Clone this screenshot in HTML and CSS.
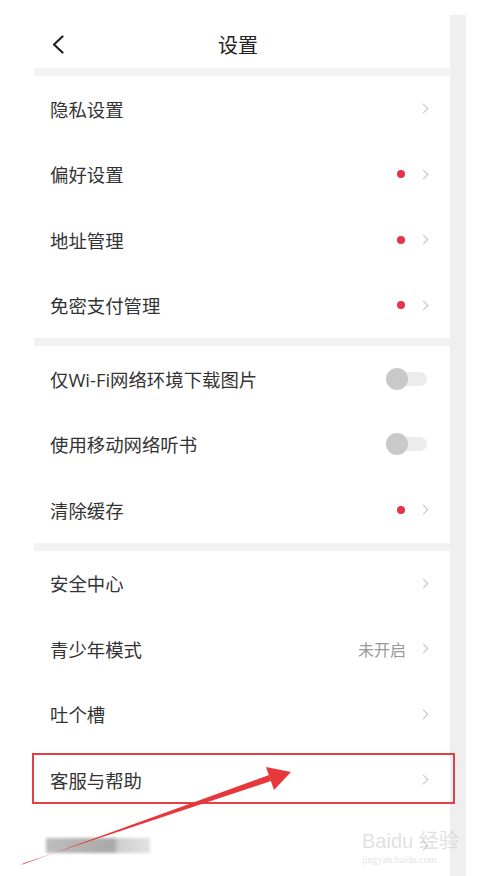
FILE: index.html
```html
<!DOCTYPE html>
<html lang="zh-CN">
<head>
    <meta charset="UTF-8">
    <meta name="viewport" content="width=device-width, initial-scale=1.0">
    <title>设置</title>
    <link rel="stylesheet" href="styles.css">
</head>
<body>

<div class="page">
    <div class="screen">
        <div class="header">
            <svg class="back" width="12" height="19" viewBox="0 0 12 19">
                <polyline points="10.5,1.5 2,9.5 10.5,17.5" fill="none" stroke="#222" stroke-width="2.2" stroke-linecap="round" stroke-linejoin="round"/>
            </svg>
            <h1>设置</h1>
            <span></span>
        </div>

        <div class="gap"></div>

        <div class="group">
            <div class="row"><span class="label">隐私设置</span><i class="chevron"></i></div>
            <div class="row"><span class="label">偏好设置</span><i class="dot"></i><i class="chevron"></i></div>
            <div class="row"><span class="label">地址管理</span><i class="dot"></i><i class="chevron"></i></div>
            <div class="row"><span class="label">免密支付管理</span><i class="dot"></i><i class="chevron"></i></div>
        </div>

        <div class="gap"></div>

        <div class="group">
            <div class="row"><span class="label">仅Wi-Fi网络环境下载图片</span><i class="toggle"></i></div>
            <div class="row"><span class="label">使用移动网络听书</span><i class="toggle"></i></div>
            <div class="row"><span class="label">清除缓存</span><i class="dot"></i><i class="chevron"></i></div>
        </div>

        <div class="gap"></div>

        <div class="group">
            <div class="row"><span class="label">安全中心</span><i class="chevron"></i></div>
            <div class="row"><span class="label">青少年模式</span><span class="value">未开启</span><i class="chevron"></i></div>
            <div class="row"><span class="label">吐个槽</span><i class="chevron"></i></div>
            <div class="row"><span class="label">客服与帮助</span><i class="chevron"></i></div>
            <div class="row"><span class="label"><span class="blurred"></span></span><i class="chevron"></i></div>
        </div>
    </div>

    <div class="rail"></div>

    <!-- annotation on top of the screenshot -->
    <div class="highlight"></div>
    <svg class="pointer" width="479" height="876" viewBox="0 0 479 876">
        <polygon points="21,865 24,863 271,781 269,775" fill="#e8373a"/>
        <polygon points="291,772 266,767 274,790" fill="#e8373a"/>
    </svg>
    <div class="watermark">
        <span class="brand">Bai<b>du</b> 经验</span>
        <span class="site">jingyan.baidu.com</span>
    </div>
</div>

</body>
</html>
```

FILE: styles.css
```css
:root {
    --text-color: #333;
    --muted-color: #999;
    --line-color: #f2f2f2;
    --accent-color: #e8334a;
}
body {
    margin: 0;
    padding: 0;
    background: #fff;
    font-family: 'Open Sans', 'Noto Sans CJK SC', sans-serif;
    color: var(--text-color);
}
.page {
    position: relative;
    display: flex;
    width: 479px;
    height: 876px;
    overflow: hidden;
}
.screen {
    width: 416px;
    margin-left: 34px;
}
.rail {
    width: 16px;
    margin-top: 15px;
    background: #efefef;
}
.header {
    height: 48px;
    display: grid;
    grid-template-columns: 1fr auto 1fr;
    align-items: center;
    padding: 20px 26px 0 18px;
}
.header .back {
    margin-top: 1px;
}
.header h1 {
    margin: 0;
    font-size: 20px;
    font-weight: 400;
    color: #222;
}
.gap {
    height: 8px;
    background: var(--line-color);
}
.row {
    height: 65.5px;
    display: flex;
    align-items: center;
    padding: 0 21px 0 16px;
}
.label {
    flex: 1;
    font-size: 18.4px;
}
.value {
    font-size: 16px;
    color: var(--muted-color);
    margin-right: 14px;
}
.dot {
    width: 8px;
    height: 8px;
    border-radius: 50%;
    background: var(--accent-color);
    margin-right: 15px;
}
.chevron {
    width: 6px;
    height: 6px;
    border-top: 1.5px solid #c2c2c2;
    border-right: 1.5px solid #c2c2c2;
    transform: rotate(45deg);
    margin-right: 2px;
}
.toggle {
    position: relative;
    width: 41px;
    height: 14px;
    border-radius: 7px;
    background: #ececec;
    margin-right: 2px;
}
.toggle::before {
    content: '';
    position: absolute;
    left: 0;
    top: -4px;
    width: 22px;
    height: 22px;
    border-radius: 50%;
    background: #c9c9c9;
}
.blurred {
    display: block;
    width: 104px;
    height: 15px;
    margin-left: -4px;
    background: linear-gradient(90deg, #bdbdbd 0%, #a9a9a9 65%, #cfcfcf 70%, #e2e2e2 100%);
    filter: blur(1.5px);
}
.highlight {
    position: absolute;
    left: 32px;
    top: 753px;
    width: 419px;
    height: 47px;
    border: 2px solid #e04046;
}
.pointer {
    position: absolute;
    left: 0;
    top: 0;
}
.watermark {
    position: absolute;
    left: 362px;
    top: 828px;
    display: flex;
    flex-direction: column;
    color: rgba(200, 200, 200, 0.55);
}
.watermark .brand {
    font-family: 'Liberation Sans', 'Noto Sans CJK SC', sans-serif;
    font-size: 20px;
    line-height: 26px;
}
.watermark .brand b {
    font-weight: 400;
}
.watermark .site {
    font-family: 'Liberation Serif', serif;
    font-size: 10px;
    line-height: 12px;
}
```
